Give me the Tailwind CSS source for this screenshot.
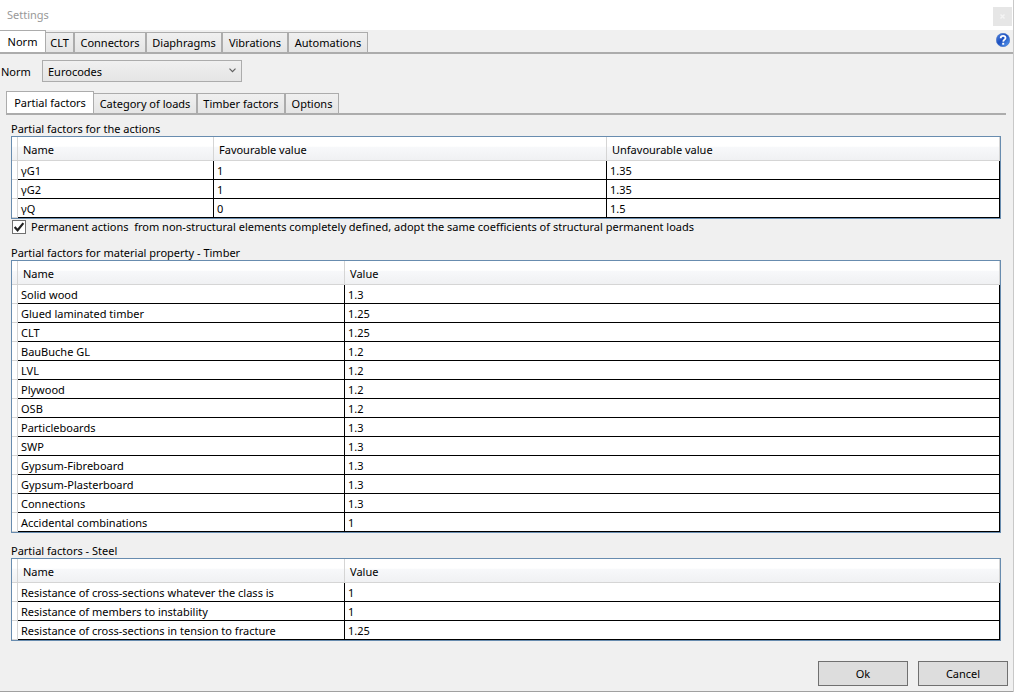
<!doctype html>
<html lang="en">
<head>
    <meta charset="UTF-8">
    <meta name="viewport" content="width=device-width, initial-scale=1.0">
    <script src="https://cdn.jsdelivr.net/npm/@tailwindcss/browser@4"></script>
    <title>Settings</title>
</head>
<body class="min-h-screen flex flex-col bg-[#f0f0f0] text-black text-[11px] leading-4 font-['Segoe_UI','Noto_Sans',sans-serif] border-r border-[#c8c8c8]">
<header class="h-[30px] shrink-0 flex items-center justify-between bg-white pl-[7px] pr-px">
    <h1 class="text-[#999999]">Settings</h1>
    <button aria-label="Close" class="mt-[3px] w-[19px] h-[19px] flex items-center justify-center bg-[#e6e6e6]">
        <svg class="w-[5px] h-[5px]" viewBox="0 0 5 5" stroke="#f4f4f4" stroke-width="1.4"><path d="M0.5 0.5L4.5 4.5M4.5 0.5L0.5 4.5"/></svg>
    </button>
</header>

<!-- main tabs -->
<div class="h-6 shrink-0 flex items-end justify-between border-b-2 border-[#acacac]">
    <div role="tablist" class="flex items-end">
        <button role="tab" aria-selected="true" class="w-[46px] h-[22px] bg-white border border-l-0 border-b-0 border-[#acacac]">Norm</button>
        <button role="tab" class="w-[28px] h-[20px] border border-l-0 border-b-0 border-[#acacac] bg-linear-to-b from-[#f0f0f0] to-[#e5e5e5]">CLT</button>
        <button role="tab" class="w-[72px] h-[20px] border border-b-0 border-[#acacac] bg-linear-to-b from-[#f0f0f0] to-[#e5e5e5]">Connectors</button>
        <button role="tab" class="w-[76px] h-[20px] border border-b-0 border-[#acacac] bg-linear-to-b from-[#f0f0f0] to-[#e5e5e5]">Diaphragms</button>
        <button role="tab" class="w-[66px] h-[20px] border border-b-0 border-[#acacac] bg-linear-to-b from-[#f0f0f0] to-[#e5e5e5]">Vibrations</button>
        <button role="tab" class="w-[80px] h-[20px] border border-b-0 border-[#acacac] bg-linear-to-b from-[#f0f0f0] to-[#e5e5e5]">Automations</button>
    </div>
    <button aria-label="Help" class="self-start mt-[3px] mr-[3px]">
        <svg class="w-[14px] h-[14px]" viewBox="0 0 14 14">
            <defs>
                <linearGradient id="help" x1="0" y1="0" x2="1" y2="1">
                    <stop offset="0" stop-color="#5b8be0"/>
                    <stop offset="0.45" stop-color="#1c4fc0"/>
                    <stop offset="1" stop-color="#5fa4f4"/>
                </linearGradient>
            </defs>
            <circle cx="7" cy="7" r="6.7" fill="url(#help)" stroke="#3d6cc4" stroke-width="0.6"/>
            <path d="M4.7 5.2C4.7 3.6 5.7 2.9 7.1 2.9C8.6 2.9 9.5 3.8 9.5 5C9.5 6.6 7.3 6.6 7.2 8.6" fill="none" stroke="#fff" stroke-width="1.8"/>
            <rect x="6.2" y="9.8" width="2" height="1.9" fill="#fff"/>
        </svg>
    </button>
</div>

<main class="flex-1 flex flex-col">
    <div class="flex items-center mt-[6px] pl-px">
        <label for="norm" class="w-[41px] pt-[2px]">Norm</label>
        <div class="relative">
            <select id="norm" class="appearance-none block w-[200px] h-[22px] pl-[5px] pt-[2px] border border-[#acacac] bg-linear-to-b from-[#f0f0f0] to-[#e5e5e5]">
                <option>Eurocodes</option>
            </select>
            <svg class="absolute right-[6px] top-[8px] w-[7px] h-[5px] pointer-events-none" viewBox="0 0 7 5" fill="none" stroke="#606060" stroke-width="1.2"><path d="M0.5 0.7L3.5 3.7L6.5 0.7"/></svg>
        </div>
    </div>

    <!-- norm tabs -->
    <div role="tablist" class="h-[24px] mt-[9px] ml-[6px] mr-[7px] flex items-end border-b-2 border-[#acacac]">
        <button role="tab" aria-selected="true" class="w-[88px] h-[22px] bg-white border border-b-0 border-[#acacac]">Partial factors</button>
        <button role="tab" class="w-[103px] h-[20px] border border-l-0 border-b-0 border-[#acacac] bg-linear-to-b from-[#f0f0f0] to-[#e5e5e5]">Category of loads</button>
        <button role="tab" class="w-[88px] h-[20px] border border-b-0 border-[#acacac] bg-linear-to-b from-[#f0f0f0] to-[#e5e5e5]">Timber factors</button>
        <button role="tab" class="w-[54px] h-[20px] border border-b-0 border-[#acacac] bg-linear-to-b from-[#f0f0f0] to-[#e5e5e5]">Options</button>
    </div>

    <div class="flex flex-col pl-[11px] pr-3 mt-[6px]">
        <h2 id="actions" class="leading-[15px]">Partial factors for the actions</h2>
        <table aria-labelledby="actions" class="w-full table-fixed border-separate border-spacing-0 border border-[#688caf] bg-white text-left [&_th]:h-6 [&_th]:p-0 [&_th]:pl-[5px] [&_th]:pt-[2px] [&_th]:font-normal [&_th]:border-r [&_th]:border-b [&_th]:border-[#d5d5d5] [&_th]:bg-linear-to-b [&_th]:from-white [&_th]:from-40% [&_th]:via-[#f7f8fa] [&_th]:via-45% [&_th]:to-[#f0f1f3] [&_td]:h-[19px] [&_td]:p-0 [&_td]:pl-[3px] [&_td]:pt-[2px] [&_td]:border-r [&_td]:border-b [&_td]:border-black [&_td:first-child]:border-[#d5d5d5]">
            <thead>
                <tr><th class="w-[6px]"></th><th class="w-[196px]">Name</th><th>Favourable value</th><th>Unfavourable value</th></tr>
            </thead>
            <tbody>
                <tr><td></td><td>γG1</td><td>1</td><td>1.35</td></tr>
                <tr><td></td><td>γG2</td><td>1</td><td>1.35</td></tr>
                <tr><td></td><td>γQ</td><td>0</td><td>1.5</td></tr>
            </tbody>
        </table>
        <label class="flex items-center gap-[5px] pl-px whitespace-pre">
            <input type="checkbox" checked class="appearance-none w-[14px] h-[14px] border border-[#707070] bg-white checked:bg-[url('data:image/svg+xml,%3Csvg%20xmlns=%22http://www.w3.org/2000/svg%22%20viewBox=%220%200%2011%2011%22%3E%3Cpath%20d=%22M1.5%205.5L4.2%208.5L9.5%202%22%20fill=%22none%22%20stroke=%22%23212121%22%20stroke-width=%222%22/%3E%3C/svg%3E')]">
            <span>Permanent actions  from non-structural elements completely defined, adopt the same coefficients of structural permanent loads</span>
        </label>

        <h2 id="timber" class="mt-[10px] leading-[15px]">Partial factors for material property - Timber</h2>
        <table aria-labelledby="timber" class="w-full table-fixed border-separate border-spacing-0 border border-[#688caf] bg-white text-left [&_th]:h-6 [&_th]:p-0 [&_th]:pl-[5px] [&_th]:pt-[2px] [&_th]:font-normal [&_th]:border-r [&_th]:border-b [&_th]:border-[#d5d5d5] [&_th]:bg-linear-to-b [&_th]:from-white [&_th]:from-40% [&_th]:via-[#f7f8fa] [&_th]:via-45% [&_th]:to-[#f0f1f3] [&_td]:h-[19px] [&_td]:p-0 [&_td]:pl-[3px] [&_td]:pt-[2px] [&_td]:border-r [&_td]:border-b [&_td]:border-black [&_td:first-child]:border-[#d5d5d5]">
            <thead>
                <tr><th class="w-[6px]"></th><th class="w-[327px]">Name</th><th>Value</th></tr>
            </thead>
            <tbody>
                <tr><td></td><td>Solid wood</td><td>1.3</td></tr>
                <tr><td></td><td>Glued laminated timber</td><td>1.25</td></tr>
                <tr><td></td><td>CLT</td><td>1.25</td></tr>
                <tr><td></td><td>BauBuche GL</td><td>1.2</td></tr>
                <tr><td></td><td>LVL</td><td>1.2</td></tr>
                <tr><td></td><td>Plywood</td><td>1.2</td></tr>
                <tr><td></td><td>OSB</td><td>1.2</td></tr>
                <tr><td></td><td>Particleboards</td><td>1.3</td></tr>
                <tr><td></td><td>SWP</td><td>1.3</td></tr>
                <tr><td></td><td>Gypsum-Fibreboard</td><td>1.3</td></tr>
                <tr><td></td><td>Gypsum-Plasterboard</td><td>1.3</td></tr>
                <tr><td></td><td>Connections</td><td>1.3</td></tr>
                <tr><td></td><td>Accidental combinations</td><td>1</td></tr>
            </tbody>
        </table>

        <h2 id="steel" class="mt-[10px] leading-[15px]">Partial factors - Steel</h2>
        <table aria-labelledby="steel" class="w-full table-fixed border-separate border-spacing-0 border border-[#688caf] bg-white text-left [&_th]:h-6 [&_th]:p-0 [&_th]:pl-[5px] [&_th]:pt-[2px] [&_th]:font-normal [&_th]:border-r [&_th]:border-b [&_th]:border-[#d5d5d5] [&_th]:bg-linear-to-b [&_th]:from-white [&_th]:from-40% [&_th]:via-[#f7f8fa] [&_th]:via-45% [&_th]:to-[#f0f1f3] [&_td]:h-[19px] [&_td]:p-0 [&_td]:pl-[3px] [&_td]:pt-[2px] [&_td]:border-r [&_td]:border-b [&_td]:border-black [&_td:first-child]:border-[#d5d5d5]">
            <thead>
                <tr><th class="w-[6px]"></th><th class="w-[327px]">Name</th><th>Value</th></tr>
            </thead>
            <tbody>
                <tr><td></td><td>Resistance of cross-sections whatever the class is</td><td>1</td></tr>
                <tr><td></td><td>Resistance of members to instability</td><td>1</td></tr>
                <tr><td></td><td>Resistance of cross-sections in tension to fracture</td><td>1.25</td></tr>
            </tbody>
        </table>
    </div>
</main>

<footer class="flex justify-end gap-[10px] pr-[5px] pb-[5px] border-b border-[#a0a0a0]">
    <button class="w-[90px] h-[25px] border border-[#707070] bg-[#dddddd]">Ok</button>
    <button class="w-[90px] h-[25px] border border-[#707070] bg-[#dddddd]">Cancel</button>
</footer>
</body>
</html>
